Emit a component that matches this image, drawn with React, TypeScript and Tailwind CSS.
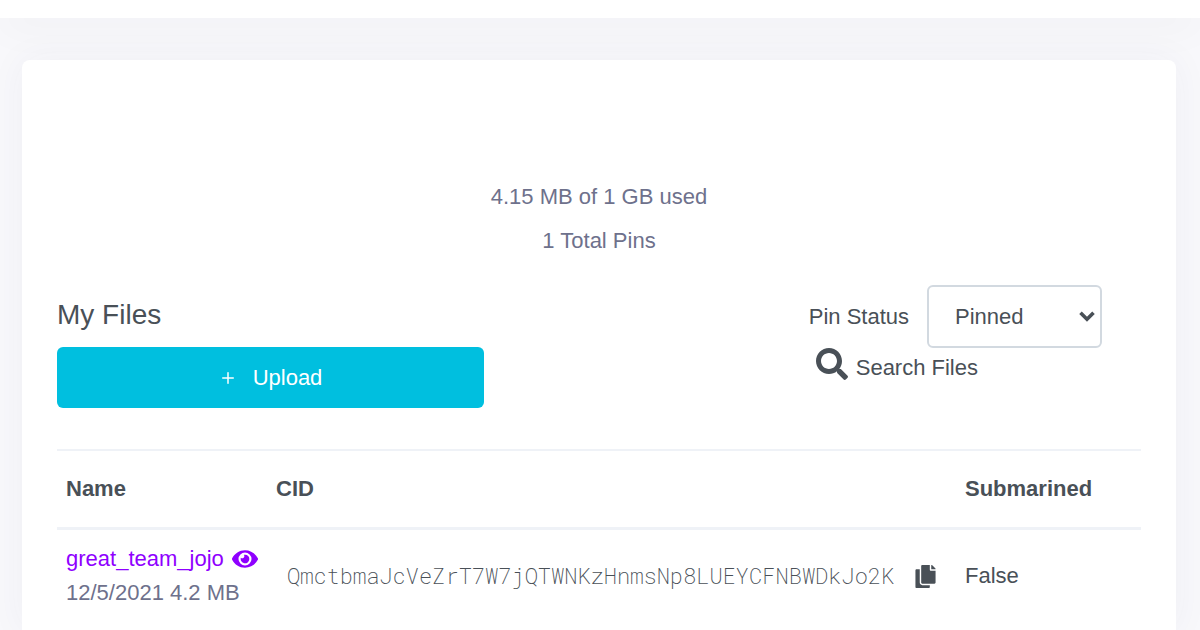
import React from "react";
import { Plus } from "lucide-react";
import { FaCopy, FaEye, FaSearch } from "react-icons/fa";

type PinnedFile = {
  name: string;
  date: string;
  size: string;
  cid: string;
  submarined: boolean;
};

const files: PinnedFile[] = [
  {
    name: "great_team_jojo",
    date: "12/5/2021",
    size: "4.2 MB",
    cid: "QmctbmaJcVeZrT7W7jQTWNKzHnmsNp8LUEYCFNBWDkJo2K",
    submarined: false,
  },
];

const Usage = () => (
  <div className="text-center text-[#6e718c]">
    <p className="mb-3">4.15 MB of 1 GB used</p>
    <p>1 Total Pins</p>
  </div>
);

const Toolbar = () => (
  <div className="mt-7 flex items-start justify-between">
    <div className="w-[427px]">
      <h1 className="mt-3 mb-3.5 text-[28px] leading-9">My Files</h1>
      <button
        type="button"
        className="flex h-[61px] w-full items-center justify-center gap-4 rounded-md bg-[#00bfdf] text-white"
      >
        <Plus className="h-[18px] w-[18px]" strokeWidth={2} />
        Upload
      </button>
    </div>
    <div className="mr-[39px]">
      <div className="flex items-center">
        <label htmlFor="pin-status" className="mr-[18px]">
          Pin Status
        </label>
        <div className="relative">
          <select
            id="pin-status"
            className="h-[63px] w-[175px] appearance-none rounded-md border-2 border-[#d2d9e0] bg-white pl-[26px]"
          >
            <option>Pinned</option>
            <option>Unpinned</option>
          </select>
          <svg
            viewBox="0 0 16 11"
            className="pointer-events-none absolute top-[26px] right-[7px] h-[11px] w-4"
            fill="none"
            stroke="currentColor"
            strokeWidth="3.6"
          >
            <path d="M1.5 1.7 8 8.2l6.500-6.500" />
          </svg>
        </div>
      </div>
      <button type="button" className="ml-[7px] flex h-8 items-center gap-2">
        <FaSearch className="h-8 w-8" />
        <span className="pt-2">Search Files</span>
      </button>
    </div>
  </div>
);

const FilesTable = () => (
  <table className="mt-[41px] w-full table-fixed border-t-2 border-[#eff2f7] text-left">
    <thead>
      <tr className="border-b-[3px] border-[#eff2f7]">
        <th className="w-[210px] px-[9px] py-[22px]">Name</th>
        <th className="px-[9px] py-[22px]">CID</th>
        <th className="w-[185px] px-[9px] py-[22px]">Submarined</th>
      </tr>
    </thead>
    <tbody>
      {files.map((file) => (
        <tr key={file.cid}>
          <td className="px-[9px] py-3 leading-[34px] whitespace-nowrap">
            <a href="#" className="flex items-center gap-2 text-[#8f00ff]">
              {file.name}
              <FaEye className="h-[26px] w-[26px] shrink-0" />
            </a>
            <span className="text-[#6e718c]">
              {file.date} {file.size}
            </span>
          </td>
          <td className="pr-[9px] pl-5">
            <div className="flex items-center gap-5">
              <span className="font-['Roboto_Mono','Liberation_Mono',monospace] font-extralight">
                {file.cid}
              </span>
              <button type="button" aria-label="Copy CID">
                <FaCopy className="h-[23px] w-[23px]" />
              </button>
            </div>
          </td>
          <td className="px-[9px]">{file.submarined ? "True" : "False"}</td>
        </tr>
      ))}
    </tbody>
  </table>
);

const App = () => (
  <div className="flex min-h-screen flex-col bg-[#f8f8fb] font-['Liberation_Sans',Arial,sans-serif] text-[22px] leading-8 text-[#495057]">
    <header className="h-[18px] bg-white shadow-[0_8px_40px_rgba(18,38,63,0.05)]" />
    <main className="mt-[42px] mr-6 ml-[22px] flex-1 rounded-t-lg bg-white px-[35px] pt-[121px] shadow-[0_0_36px_rgba(60,50,120,0.05)]">
      <Usage />
      <Toolbar />
      <FilesTable />
    </main>
  </div>
);

export default App;
